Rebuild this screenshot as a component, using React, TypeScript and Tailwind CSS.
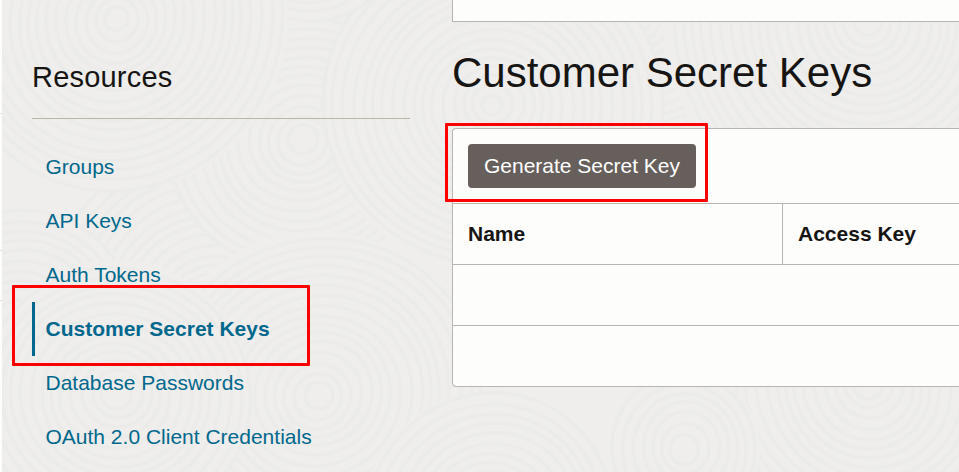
import React from 'react';

type Swirl = { x: number; y: number; r: number };

const swirls: Swirl[] = [
  { x: 640, y: 20, r: 160 },
  { x: 490, y: 540, r: 60 },
  { x: 215, y: 320, r: 175 },
  { x: 20, y: 330, r: 120 },
  { x: 303, y: 139, r: 135 },
  { x: 493, y: 105, r: 170 },
  { x: 305, y: -70, r: 95 },
  { x: 868, y: 20, r: 205 },
  { x: 116, y: 20, r: 172 },
  { x: 318, y: 395, r: 164 },
  { x: 116, y: 395, r: 135 },
  { x: 868, y: 385, r: 205 },
  { x: 685, y: 448, r: 75 },
  { x: 490, y: 520, r: 128 },
];

function Background() {
  return (
    <svg className="absolute inset-0 h-full w-full" viewBox="2 0 957 472" aria-hidden="true">
      {swirls.map((s, i) => (
        <g key={i} fill="none" stroke="#ebebe9" strokeWidth="3.5" transform={`rotate(${i * 37} ${s.x} ${s.y})`}>
          <circle cx={s.x} cy={s.y} r={s.r} fill="#efeeec" stroke="none" />
          {Array.from({ length: Math.floor(s.r / 10) }, (_, n) => (
            <ellipse
              key={n}
              cx={s.x + Math.sin(n * 1.3) * 1.5}
              cy={s.y + Math.cos(n * 0.9) * 1.5}
              rx={s.r - n * 10}
              ry={(s.r - n * 10) * 0.95}
            />
          ))}
        </g>
      ))}
    </svg>
  );
}

const resources = [
  'Groups',
  'API Keys',
  'Auth Tokens',
  'Customer Secret Keys',
  'Database Passwords',
  'OAuth 2.0 Client Credentials',
];

function Sidebar() {
  return (
    <aside className="w-[378px] shrink-0">
      <h2 className="h-[119px] border-b border-[#b8b5a9] pt-[60px] text-[29px] leading-[34px] tracking-[0.2px] text-[#161513]">
        Resources
      </h2>
      <ul className="pt-[21px] text-[21px] leading-[54px] text-[#00688c]">
        {resources.map((item) => {
          const active = item === 'Customer Secret Keys';
          return (
            <li
              key={item}
              className={
                active
                  ? 'relative h-[54px] border-l-[3px] border-[#00688c] pl-[10.5px] font-bold whitespace-nowrap'
                  : 'h-[54px] pl-[13.5px] whitespace-nowrap'
              }
            >
              {item}
              {active && (
                <span className="absolute -top-[17px] -left-[23px] h-[81px] w-[298px] rounded-[1px] border-[3px] border-[#ff0000]" />
              )}
            </li>
          );
        })}
      </ul>
    </aside>
  );
}

function SecretKeys() {
  return (
    <main className="ml-[42px] min-w-0 flex-1">
      <div className="h-[22px] border-b border-l border-[#b8b5af] bg-[#fdfdfb]" />
      <h1 className="h-[106px] pt-[27px] text-[42px] leading-[48px] whitespace-nowrap text-[#161513]">
        Customer Secret Keys
      </h1>
      <section className="rounded-l-[4px] border border-r-0 border-[#b8b5af] bg-[#fdfdfb] text-[21px] text-[#161513]">
        <div className="h-[74px] pt-[15px] pl-[15px]">
          <div className="relative w-[228px]">
            <button className="h-11 w-[228px] rounded-[4px] bg-[#665f5b] text-white">
              Generate Secret Key
            </button>
            <span className="pointer-events-none absolute -top-[21px] -left-[23px] h-[79px] w-[263px] rounded-[1px] border-[3px] border-[#ff0000]" />
          </div>
        </div>
        <div className="flex h-[61px] border-t border-[#b8b5af] leading-[60px] font-bold">
          <div className="w-[329px] pl-[15px]">Name</div>
          <div className="flex-1 border-l border-[#b8b5af] pl-[15px]">Access Key</div>
        </div>
        <div className="h-[61px] border-t border-[#b8b5af]" />
        <div className="h-[61px] border-t border-[#b8b5af]" />
      </section>
    </main>
  );
}

export default function App() {
  return (
    <div className="flex h-[472px] w-[959px] overflow-hidden bg-[#fdfdfc] font-['Liberation_Sans',Arial,sans-serif]">
      <div className="w-[2px] shrink-0">
        <div className="h-[114px] border-b border-[#dddddb]" />
        <div className="h-[137px] border-b border-[#dddddb]" />
        <div className="h-[50px] border-b border-[#dddddb]" />
      </div>
      <div className="relative flex-1 overflow-hidden bg-[#efeeec]">
        <Background />
        <div className="relative flex pl-[30px]">
          <Sidebar />
          <SecretKeys />
        </div>
      </div>
    </div>
  );
}
